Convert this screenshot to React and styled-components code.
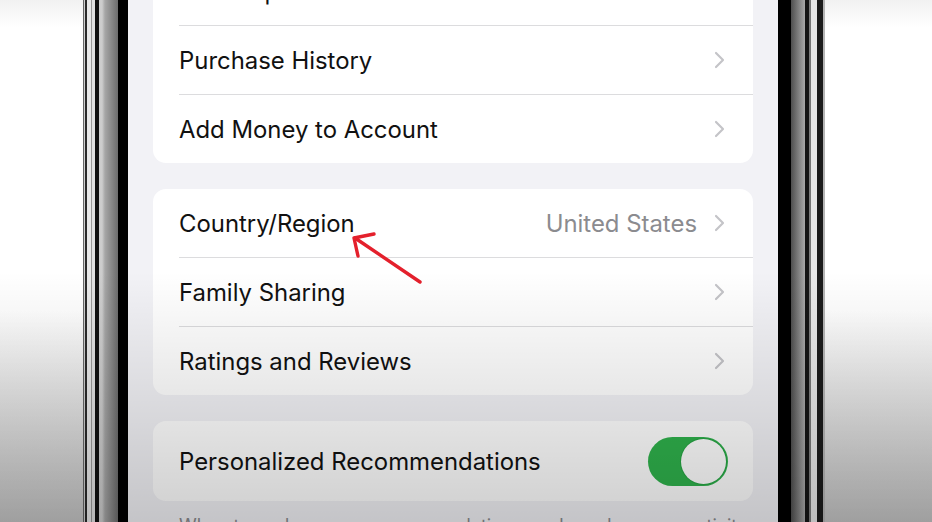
import React from 'react';
import styled, { createGlobalStyle } from 'styled-components';

const GlobalStyle = createGlobalStyle`
    html, body {
        margin: 0;
        padding: 0;
        overflow: hidden;
        background: #fff;
    }
    body {
        font-family: "Inter", "Liberation Sans", sans-serif;
        -webkit-font-smoothing: antialiased;
    }
`

const leftBezel = `linear-gradient(to right,
    #666 0 1px, #cfcfcf 1px 2px, #2a2a2a 2px 4px, #e9e9e9 4px 8px, #9a9a9a 8px 9px,
    #e2e2e2 9px 12px, #111 12px 16px, #cdcdcd 16px 19px, #a6a6a6 22px, #6c6c6c 35px,
    #000 35px 45px)`

const rightBezel = `linear-gradient(to right,
    #000 0 13px, #4e4e4e 13px, #a9a9a9 27px, #151515 27px 31px, #7a7a7a 31px 33px,
    #e9e9e9 33px 39px, #1c1c1c 39px 45px, #b5b5b5 45px 47px)`

const rows = [
    { label: 'Subscriptions' },
    { label: 'Purchase History' },
    { label: 'Add Money to Account' },
]

const rows2 = [
    { label: 'Country/Region', value: 'United States' },
    { label: 'Family Sharing' },
    { label: 'Ratings and Reviews' },
]

const Chevron = () => (
    <ChevronIcon width="11" height="18" viewBox="0 0 11 18">
        <polyline points="2,2 9,9 2,16" fill="none" stroke="#c4c4c8" strokeWidth="2.2" strokeLinecap="round" strokeLinejoin="round" />
    </ChevronIcon>
)

const SettingsRow = ({ label, value, first }) => (
    <Row>
        <RowInner $first={first}>
            <Label>{label}</Label>
            {value && <Value>{value}</Value>}
            <Chevron />
        </RowInner>
    </Row>
)

const App = () => {
    return (
        <>
            <GlobalStyle />
            <Page>
                <Backdrop $width="83px" />
                <Bezel $bg={leftBezel} $width="45px" />
                <Screen>
                    <Card $offset="-43px">
                        {rows.map((r, i) => <SettingsRow key={r.label} {...r} first={i === 0} />)}
                    </Card>
                    <Card>
                        {rows2.map((r, i) => <SettingsRow key={r.label} {...r} first={i === 0} />)}
                    </Card>
                    <Card>
                        <Row>
                            <RowInner $first $tall>
                                <Label>Personalized Recommendations</Label>
                                <Toggle><Knob /></Toggle>
                            </RowInner>
                        </Row>
                    </Card>
                    <Footnote>When turned on, your recommendations are based on your activity</Footnote>
                    <Arrow width="90" height="65" viewBox="0 0 90 65">
                        <g fill="none" stroke="#e4202c" strokeWidth="3.4" strokeLinecap="round" strokeLinejoin="round">
                            <line x1="77" y1="57" x2="12" y2="13" />
                            <polyline points="31,9 11,13 15,31" />
                        </g>
                    </Arrow>
                </Screen>
                <Bezel $bg={rightBezel} $width="47px" />
                <Backdrop />
            </Page>
        </>
    )
}

export default App

const Page = styled.div`
    position: relative;
    display: flex;
    width: 932px;
    height: 522px;
    overflow: hidden;
    background: linear-gradient(to bottom, #f1f1f1 0, #fff 28px, #fff 310px, #c4c4c4 522px);

    &::after {
        content: '';
        position: absolute;
        inset: 0;
        pointer-events: none;
        background: linear-gradient(to bottom, rgba(0,0,0,0) 52%, rgba(0,0,0,0.19) 100%);
    }
`

const Backdrop = styled.div`
    flex: ${p => p.$width ? `0 0 ${p.$width}` : '1'};
`

const Bezel = styled.div`
    flex: 0 0 ${p => p.$width};
    background: ${p => p.$bg};
`

const Screen = styled.div`
    position: relative;
    flex: 0 0 650px;
    box-sizing: border-box;
    padding: 0 25px;
    display: flex;
    flex-direction: column;
    gap: 26px;
    background: #f2f2f6;
`

const Card = styled.div`
    flex-shrink: 0;
    margin-top: ${p => p.$offset || '0'};
    background: #fff;
    border-radius: 13px;
    overflow: hidden;
`

const Row = styled.div`
    display: flex;
    padding-left: 26px;
`

const RowInner = styled.div`
    flex: 1;
    display: flex;
    align-items: center;
    height: ${p => p.$tall ? '80px' : '68px'};
    padding-right: ${p => p.$tall ? '25px' : '28px'};
    border-top: ${p => p.$first ? 'none' : '1px solid #dcdcde'};
`

const Label = styled.span`
    flex: 1;
    font-size: 23.9px;
    color: #111;
`

const Value = styled.span`
    font-size: 23.9px;
    color: #8b8b8f;
    margin-right: 17px;
`

const ChevronIcon = styled.svg`
    display: block;
`

const Toggle = styled.div`
    display: flex;
    justify-content: flex-end;
    align-items: center;
    box-sizing: border-box;
    width: 80px;
    height: 49px;
    padding: 2px;
    border-radius: 25px;
    background: #2fb24c;
`

const Knob = styled.div`
    width: 45px;
    height: 45px;
    border-radius: 50%;
    background: #fff;
    box-shadow: 0 0 0 1px #27a444;
`

const Footnote = styled.p`
    flex-shrink: 0;
    margin: -12px 0 0 26px;
    font-size: 18px;
    color: #8a8a8e;
`

const Arrow = styled.svg`
    position: absolute;
    left: 215px;
    top: 225px;
`
